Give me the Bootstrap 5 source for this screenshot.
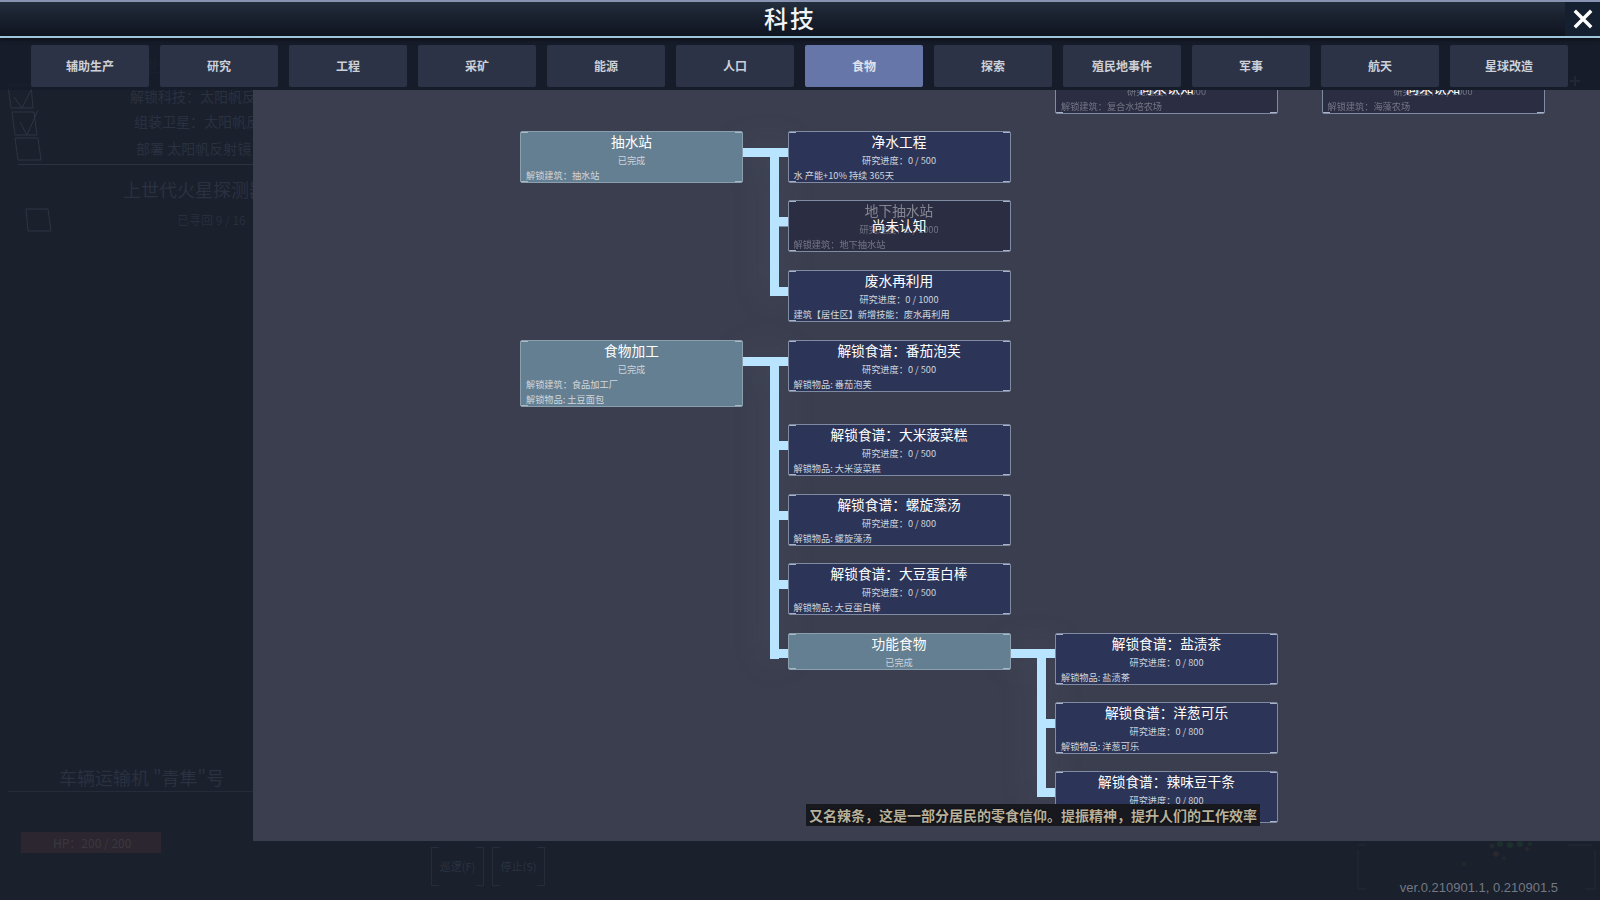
<!DOCTYPE html>
<html lang="zh">
<head>
<meta charset="utf-8">
<title>科技</title>
<link href="https://cdn.jsdelivr.net/npm/bootstrap@5.3.0/dist/css/bootstrap.min.css" rel="stylesheet">
<style>
html,body{height:900px;}
body{background:#1a202c;font-family:"Noto Sans CJK SC","Noto Sans",sans-serif;overflow:hidden;position:relative;color:#fff;}
/* dimmed game scene behind the window */
.scene{position:absolute;inset:0;}
.scene-txt{position:absolute;white-space:nowrap;color:#2b3140;line-height:1;}
.s1{left:130px;top:89px;font-size:14px;}
.s2{left:134px;top:114px;font-size:14px;}
.s3{left:136px;top:141px;font-size:14px;}
.s4{left:123px;top:180px;font-size:18px;}
.s5{left:177px;top:214px;font-size:12px;color:#282e3c;}
.s6{left:59px;top:768px;font-size:18px;}
.s7{left:123px;top:56px;font-size:18px;}
.s-line{position:absolute;height:1px;background:#2c3240;left:18px;width:235px;top:164px;}
.s-line2{left:8px;width:245px;top:791px;background:#252b38;}
.hpbar{position:absolute;left:21px;top:832px;width:140px;height:21px;background:#2b2630;color:#3b3840;font-size:12px;line-height:21px;padding-left:32px;}
.scene-btn{position:absolute;top:847px;width:53px;height:39px;color:#2c3240;font-size:11px;text-align:center;line-height:39px;
 background:
 linear-gradient(#262c39,#262c39) 0 0/8px 1px no-repeat,linear-gradient(#262c39,#262c39) 100% 0/8px 1px no-repeat,
 linear-gradient(#262c39,#262c39) 0 100%/8px 1px no-repeat,linear-gradient(#262c39,#262c39) 100% 100%/8px 1px no-repeat,
 linear-gradient(#262c39,#262c39) 0 0/1px 100% no-repeat,linear-gradient(#262c39,#262c39) 100% 0/1px 100% no-repeat;}
.sb1{left:431px;}.sb2{left:492px;}
.scene-svg{position:absolute;left:0;top:0;}
/* header */
.top-bar{position:relative;z-index:3;height:38px;padding-right:20px;background:linear-gradient(#232e3c 0,#1b2331 35%,#0f1420 100%);border-top:2px solid #8793b0;border-bottom:2px solid #9fc6da;box-shadow:0 2px 4px rgba(0,0,0,.45);}
.top-title{font-size:24px;font-weight:500;line-height:1;letter-spacing:2px;color:#f1f3f6;margin-top:-2px;}
.close-x{position:absolute;right:0;top:0;width:35px;height:34px;background:#14202f;border:0;padding:0;display:flex;align-items:center;justify-content:center;}
/* tabs */
.tab-strip{position:relative;z-index:2;height:52px;padding:7px 32px 3px 31px;gap:11px;background:rgba(22,28,41,.82);}
.tab-btn{width:118px;height:42px;flex:none;background:#2d3346;color:#ccd0d8;border:0;border-radius:2px;font-size:12px;font-weight:700;padding:0;display:flex;align-items:center;justify-content:center;}
.tab-btn.on{background:#6776a9;color:#dfe3ee;}
/* tree panel */
.tree-panel{position:relative;z-index:1;margin-left:253px;height:751px;background:#3b3e4e;overflow:hidden;}
.wires{position:absolute;left:0;top:0;}
.tech-node{position:absolute;width:223px;border:1px solid #7f8aa3;border-radius:2px;color:#fff;overflow:hidden;
 --c:#a9b2c6;
 background:
 linear-gradient(var(--c),var(--c)) 0 0/7px 1px no-repeat,linear-gradient(var(--c),var(--c)) 100% 0/7px 1px no-repeat,
 linear-gradient(var(--c),var(--c)) 0 100%/7px 1px no-repeat,linear-gradient(var(--c),var(--c)) 100% 100%/7px 1px no-repeat,
 #2c3557;}
.tech-node.done{background-color:#647f91;--c:#a9bac6;border-color:#8ba0ae;}
.tech-node.dim{background-color:#2b2d42;}
.node-name{font-size:13.7px;line-height:18px;margin-bottom:3px;text-align:center;white-space:nowrap;}
.node-sub{font-size:9.2px;line-height:15px;text-align:center;color:#cfd3da;white-space:nowrap;}
.node-line{font-size:9.2px;line-height:15px;padding-left:5px;color:#d2d6dc;white-space:nowrap;}
.dim .node-name,.dim .node-sub,.dim .node-line{opacity:.42;}
.node-mask{position:absolute;left:0;right:0;top:14px;text-align:center;font-size:13.7px;line-height:20px;color:#fff;}
.ca{left:267px}.cb{left:534.5px}.cc{left:802px}.cd{left:1068.5px}
.h52{height:52px}.h67{height:67px}.h37{height:37px}
.y1{top:41px}.y2{top:110px}.y3{top:179.5px}.y4{top:249.5px}.y5{top:334px}.y6{top:403.5px}.y7{top:472.5px}.y8{top:542.5px}.y9{top:611.5px}.y10{top:681px}.y0{top:-28px}
.hint{position:absolute;left:553px;top:714px;height:22px;width:454px;background:#18191f;color:#b7b09b;font-size:14px;font-weight:700;line-height:22px;text-align:center;white-space:nowrap;text-shadow:0 0 2px #000;}
.ver{position:absolute;z-index:2;right:42px;top:880px;font-family:"Liberation Sans",Arial,sans-serif;font-size:13px;line-height:16px;color:#737885;}
</style>
</head>
<body>
<div class="scene">
  <svg class="scene-svg" width="1600" height="900" fill="none" stroke="#2e3442" stroke-width="1">
    <path d="M8 85H31L33 108H11ZM12 112H34L37 135H15ZM15 138H38L41 160H18ZM26 209H48L51 231H28Z"/>
    <path d="M14 97L22 108L32 88M20 122L27 135L38 110"/>
    <path d="M1358 850V889H1366M1595 850V889H1585M1358 845H1366M1592 845H1568" stroke="#242a36"/>
    <g stroke="none">
      <circle cx="1492" cy="846" r="2.5" fill="#25292f"/><circle cx="1500" cy="844" r="3" fill="#1c2f2d"/><circle cx="1510" cy="845" r="3" fill="#1c302d"/><circle cx="1520" cy="844" r="3" fill="#1c302d"/><circle cx="1530" cy="844" r="2" fill="#1c2f2d"/>
      <circle cx="1496" cy="854" r="3" fill="#28282e"/><circle cx="1504" cy="858" r="2" fill="#20292c"/><circle cx="1527" cy="849" r="2" fill="#29272f"/><circle cx="1464" cy="864" r="2" fill="#25272b"/>
    </g>
    <path d="M1570 81H1580M1575 76V86" stroke="#565b6b" stroke-width="2"/>
  </svg>
  <div class="scene-txt s7">上世代</div>
  <div class="scene-txt s1">解锁科技：太阳帆反射镜</div>
  <div class="scene-txt s2">组装卫星：太阳帆反射镜</div>
  <div class="scene-txt s3">部署 太阳帆反射镜：2</div>
  <div class="s-line"></div>
  <div class="scene-txt s4">上世代火星探测器</div>
  <div class="scene-txt s5">已寻回 9 / 16</div>
  <div class="scene-txt s6">车辆运输机 "青隼"号</div>
  <div class="s-line s-line2"></div>
  <div class="hpbar">HP：200 / 200</div>
  <div class="scene-btn sb1">巡逻(F)</div>
  <div class="scene-btn sb2">停止(S)</div>
</div>

<header class="top-bar d-flex align-items-center justify-content-center">
  <div class="top-title">科技</div>
  <button class="close-x" type="button" aria-label="关闭">
    <svg width="20" height="20" viewBox="0 0 20 20"><path d="M3 3L17 17M17 3L3 17" stroke="#fff" stroke-width="3.4" stroke-linecap="square"/></svg>
  </button>
</header>

<nav class="tab-strip d-flex">
  <button class="btn tab-btn" type="button">辅助生产</button>
  <button class="btn tab-btn" type="button">研究</button>
  <button class="btn tab-btn" type="button">工程</button>
  <button class="btn tab-btn" type="button">采矿</button>
  <button class="btn tab-btn" type="button">能源</button>
  <button class="btn tab-btn" type="button">人口</button>
  <button class="btn tab-btn on" type="button">食物</button>
  <button class="btn tab-btn" type="button">探索</button>
  <button class="btn tab-btn" type="button">殖民地事件</button>
  <button class="btn tab-btn" type="button">军事</button>
  <button class="btn tab-btn" type="button">航天</button>
  <button class="btn tab-btn" type="button">星球改造</button>
</nav>

<main class="tree-panel">
  <svg class="wires" width="1347" height="751" viewBox="253 90 1347 751">
    <defs><filter id="glow" x="-50%" y="-50%" width="200%" height="200%"><feGaussianBlur stdDeviation="16"/></filter></defs>
    <g fill="#4d5a70" filter="url(#glow)" opacity=".55">
      <rect x="743" y="148" width="45" height="9"/><rect x="770" y="148" width="9" height="148"/><rect x="743" y="357" width="45" height="9"/><rect x="770" y="357" width="9" height="302"/><rect x="1010" y="649" width="45" height="9"/><rect x="1037" y="649" width="9" height="148"/>
    </g>
    <g fill="#b8e4ff">
      <rect x="743" y="148" width="45" height="9"/><rect x="770" y="148" width="9" height="148"/>
      <rect x="779" y="217" width="9" height="9.5"/><rect x="779" y="287" width="9" height="9"/>
      <rect x="743" y="357" width="45" height="9"/><rect x="770" y="357" width="9" height="302"/>
      <rect x="779" y="441" width="9" height="9"/><rect x="779" y="511" width="9" height="9"/><rect x="779" y="580" width="9" height="9"/><rect x="779" y="649" width="9" height="9"/>
      <rect x="1010" y="649" width="45" height="9"/><rect x="1037" y="649" width="9" height="148"/>
      <rect x="1046" y="719" width="9" height="9"/><rect x="1046" y="788" width="9" height="9"/>
    </g>
  </svg>

  <div class="card tech-node dim cc y0 h52"><div class="node-name">复合水培农场</div><div class="node-sub">研究进度：0 / 1000</div><div class="node-line">解锁建筑：复合水培农场</div><div class="node-mask">尚未认知</div></div>
  <div class="card tech-node dim cd y0 h52"><div class="node-name">海藻农场</div><div class="node-sub">研究进度：0 / 1000</div><div class="node-line">解锁建筑：海藻农场</div><div class="node-mask">尚未认知</div></div>

  <div class="card tech-node done ca y1 h52"><div class="node-name">抽水站</div><div class="node-sub">已完成</div><div class="node-line">解锁建筑：抽水站</div></div>
  <div class="card tech-node cb y1 h52"><div class="node-name">净水工程</div><div class="node-sub">研究进度：0 / 500</div><div class="node-line">水 产能+10% 持续 365天</div></div>
  <div class="card tech-node dim cb y2 h52"><div class="node-name">地下抽水站</div><div class="node-sub">研究进度：0 / 1000</div><div class="node-line">解锁建筑：地下抽水站</div><div class="node-mask">尚未认知</div></div>
  <div class="card tech-node cb y3 h52"><div class="node-name">废水再利用</div><div class="node-sub">研究进度：0 / 1000</div><div class="node-line">建筑【居住区】新增技能：废水再利用</div></div>

  <div class="card tech-node done ca y4 h67"><div class="node-name">食物加工</div><div class="node-sub">已完成</div><div class="node-line">解锁建筑：食品加工厂</div><div class="node-line">解锁物品: 土豆面包</div></div>
  <div class="card tech-node cb y4 h52"><div class="node-name">解锁食谱：番茄泡芙</div><div class="node-sub">研究进度：0 / 500</div><div class="node-line">解锁物品: 番茄泡芙</div></div>
  <div class="card tech-node cb y5 h52"><div class="node-name">解锁食谱：大米菠菜糕</div><div class="node-sub">研究进度：0 / 500</div><div class="node-line">解锁物品: 大米菠菜糕</div></div>
  <div class="card tech-node cb y6 h52"><div class="node-name">解锁食谱：螺旋藻汤</div><div class="node-sub">研究进度：0 / 800</div><div class="node-line">解锁物品: 螺旋藻汤</div></div>
  <div class="card tech-node cb y7 h52"><div class="node-name">解锁食谱：大豆蛋白棒</div><div class="node-sub">研究进度：0 / 500</div><div class="node-line">解锁物品: 大豆蛋白棒</div></div>
  <div class="card tech-node done cb y8 h37"><div class="node-name">功能食物</div><div class="node-sub">已完成</div></div>
  <div class="card tech-node cc y8 h52"><div class="node-name">解锁食谱：盐渍茶</div><div class="node-sub">研究进度：0 / 800</div><div class="node-line">解锁物品: 盐渍茶</div></div>
  <div class="card tech-node cc y9 h52"><div class="node-name">解锁食谱：洋葱可乐</div><div class="node-sub">研究进度：0 / 800</div><div class="node-line">解锁物品: 洋葱可乐</div></div>
  <div class="card tech-node cc y10 h52"><div class="node-name">解锁食谱：辣味豆干条</div><div class="node-sub">研究进度：0 / 800</div><div class="node-line">解锁物品: 辣味豆干条</div></div>

  <div class="hint">又名辣条，这是一部分居民的零食信仰。提振精神，提升人们的工作效率</div>
</main>

<div class="ver">ver.0.210901.1, 0.210901.5</div>
<script src="https://cdn.jsdelivr.net/npm/bootstrap@5.3.0/dist/js/bootstrap.bundle.min.js"></script>
</body>
</html>
